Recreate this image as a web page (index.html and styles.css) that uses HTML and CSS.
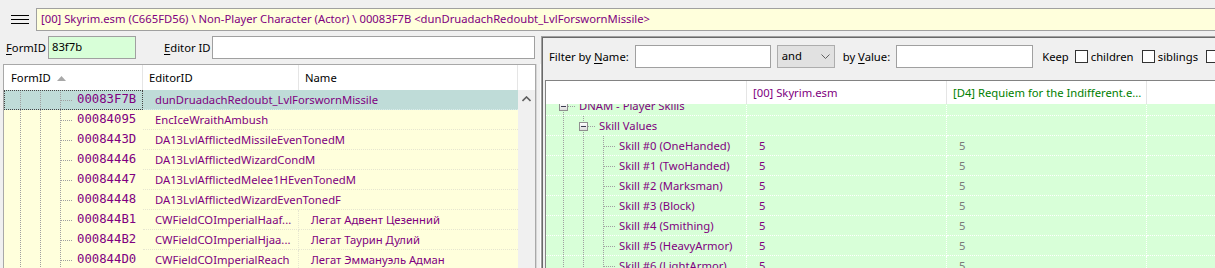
FILE: index.html
```html
<!DOCTYPE html>
<html lang="en">
<head>
    <meta charset="UTF-8">
    <title>xEdit</title>
    <link rel="stylesheet" href="styles.css">
</head>
<body>

    <header class="topbar">
        <div class="menu-button"><span></span><span></span><span></span></div>
        <div class="path">[00] Skyrim.esm (C665FD56) \ Non-Player Character (Actor) \ 00083F7B &lt;dunDruadachRedoubt_LvlForswornMissile&gt;</div>
    </header>

    <div class="workspace">
        <section class="left-pane">
            <div class="id-bar">
                <label class="lbl-formid"><u>F</u>ormID</label>
                <div class="field field-formid">83f7b</div>
                <label class="lbl-editorid"><u>E</u>ditor ID</label>
                <div class="field field-editorid"></div>
            </div>

            <div class="record-list">
                <div class="list-header">
                    <div class="hcol col-fid">FormID
                        <svg class="sort-arrow" width="9" height="5" viewBox="0 0 9 5"><path d="M0 5 L4.5 0 L9 5 Z" fill="#a8a8a8"/></svg>
                    </div>
                    <div class="hcol col-eid">EditorID</div>
                    <div class="hcol col-name">Name</div>
                    <div class="hcol col-rest"></div>
                </div>
                <div class="list-body">
                    <div class="list-rows">
                        <div class="lrow selected">
                            <div class="fid focused"><span class="indent"></span><span class="indent"></span><span class="leaf"></span>00083F7B</div>
                            <div class="eid wide">dunDruadachRedoubt_LvlForswornMissile</div>
                        </div>
                        <div class="lrow">
                            <div class="fid"><span class="indent"></span><span class="indent"></span><span class="leaf"></span>00084095</div>
                            <div class="eid wide">EncIceWraithAmbush</div>
                        </div>
                        <div class="lrow">
                            <div class="fid"><span class="indent"></span><span class="indent"></span><span class="leaf"></span>0008443D</div>
                            <div class="eid wide">DA13LvlAfflictedMissileEvenTonedM</div>
                        </div>
                        <div class="lrow">
                            <div class="fid"><span class="indent"></span><span class="indent"></span><span class="leaf"></span>00084446</div>
                            <div class="eid wide">DA13LvlAfflictedWizardCondM</div>
                        </div>
                        <div class="lrow">
                            <div class="fid"><span class="indent"></span><span class="indent"></span><span class="leaf"></span>00084447</div>
                            <div class="eid wide">DA13LvlAfflictedMelee1HEvenTonedM</div>
                        </div>
                        <div class="lrow">
                            <div class="fid"><span class="indent"></span><span class="indent"></span><span class="leaf"></span>00084448</div>
                            <div class="eid wide">DA13LvlAfflictedWizardEvenTonedF</div>
                        </div>
                        <div class="lrow">
                            <div class="fid"><span class="indent"></span><span class="indent"></span><span class="leaf"></span>000844B1</div>
                            <div class="eid">CWFieldCOImperialHaaf...</div>
                            <div class="name">Легат Адвент Цезенний</div>
                        </div>
                        <div class="lrow">
                            <div class="fid"><span class="indent"></span><span class="indent"></span><span class="leaf"></span>000844B2</div>
                            <div class="eid">CWFieldCOImperialHjaa...</div>
                            <div class="name">Легат Таурин Дулий</div>
                        </div>
                        <div class="lrow">
                            <div class="fid"><span class="indent"></span><span class="indent"></span><span class="leaf"></span>000844D0</div>
                            <div class="eid">CWFieldCOImperialReach</div>
                            <div class="name">Легат Эммануэль Адман</div>
                        </div>
                    </div>
                    <div class="vscroll">
                        <svg width="9" height="6" viewBox="0 0 9 6"><path d="M0.5 5 L4.5 1 L8.5 5" fill="none" stroke="#606060" stroke-width="1.6"/></svg>
                    </div>
                </div>
            </div>
        </section>

        <div class="splitter"></div>

        <section class="right-pane">
            <div class="filter-bar">
                <span class="flabel">Filter by <u>N</u>ame:</span>
                <div class="field field-name"></div>
                <div class="combo">and
                    <svg width="9" height="5" viewBox="0 0 9 5"><path d="M0.5 0.5 L4.5 4.5 L8.5 0.5" fill="none" stroke="#606060" stroke-width="1"/></svg>
                </div>
                <span class="flabel by-value">by <u>V</u>alue:</span>
                <div class="field field-value"></div>
                <span class="flabel keep">Keep</span>
                <div class="toggle toggle-children"><span class="check"></span>children</div>
                <div class="toggle toggle-siblings"><span class="check"></span>siblings</div>
                <div class="toggle toggle-last"><span class="check"></span></div>
            </div>

            <div class="view-grid">
                <div class="grid-header">
                    <div class="gcol gcol-tree"></div>
                    <div class="gcol gcol-master">[00] Skyrim.esm</div>
                    <div class="gcol gcol-plugin">[D4] Requiem for the Indifferent.e...</div>
                    <div class="gcol gcol-rest"></div>
                </div>
                <div class="grid-body">
                    <div class="grid-rows">
                        <div class="grow">
                            <div class="tree"><span class="node open"><i class="box"></i></span>DNAM - Player Skills</div>
                            <div class="val"></div><div class="val"></div><div class="val rest"></div>
                        </div>
                        <div class="grow">
                            <div class="tree"><span class="indent"></span><span class="node open"><i class="box"></i></span>Skill Values</div>
                            <div class="val"></div><div class="val"></div><div class="val rest"></div>
                        </div>
                        <div class="grow">
                            <div class="tree"><span class="indent"></span><span class="indent"></span><span class="leaf"></span>Skill #0 (OneHanded)</div>
                            <div class="val">5</div><div class="val other">5</div><div class="val rest"></div>
                        </div>
                        <div class="grow">
                            <div class="tree"><span class="indent"></span><span class="indent"></span><span class="leaf"></span>Skill #1 (TwoHanded)</div>
                            <div class="val">5</div><div class="val other">5</div><div class="val rest"></div>
                        </div>
                        <div class="grow">
                            <div class="tree"><span class="indent"></span><span class="indent"></span><span class="leaf"></span>Skill #2 (Marksman)</div>
                            <div class="val">5</div><div class="val other">5</div><div class="val rest"></div>
                        </div>
                        <div class="grow">
                            <div class="tree"><span class="indent"></span><span class="indent"></span><span class="leaf"></span>Skill #3 (Block)</div>
                            <div class="val">5</div><div class="val other">5</div><div class="val rest"></div>
                        </div>
                        <div class="grow">
                            <div class="tree"><span class="indent"></span><span class="indent"></span><span class="leaf"></span>Skill #4 (Smithing)</div>
                            <div class="val">5</div><div class="val other">5</div><div class="val rest"></div>
                        </div>
                        <div class="grow">
                            <div class="tree"><span class="indent"></span><span class="indent"></span><span class="leaf"></span>Skill #5 (HeavyArmor)</div>
                            <div class="val">5</div><div class="val other">5</div><div class="val rest"></div>
                        </div>
                        <div class="grow">
                            <div class="tree"><span class="indent"></span><span class="indent"></span><span class="leaf"></span>Skill #6 (LightArmor)</div>
                            <div class="val">5</div><div class="val other">5</div><div class="val rest"></div>
                        </div>
                    </div>
                </div>
            </div>
        </section>
    </div>

</body>
</html>
```

FILE: styles.css
```css
:root {
    --window-bg: #f0f0f0;
    --record-text: #800080; /* purple record text */
    --plugin-text: #008000; /* green override header */
    --row-yellow: #ffffdc;
    --row-green: #d8ffd8;
    --row-selected: #bfdcd8;
    --tree-line: #a0a0a0;
    --field-border: #a0a0a0;
}

* {
    box-sizing: border-box;
}

body {
    margin: 0;
    width: 1215px;
    height: 268px;
    overflow: hidden;
    background-color: var(--window-bg);
    font-family: "Segoe UI", "Noto Sans", sans-serif;
    font-size: 11.25px;
    color: #000;
}

u {
    text-decoration-thickness: 1px;
    text-underline-offset: 2px;
}

/* top path bar */
.topbar {
    display: flex;
    align-items: flex-start;
    height: 34px;
    padding-top: 8px;
}

.menu-button {
    width: 36px;
    padding: 7px 0 0 11px;
}

.menu-button span {
    display: block;
    width: 18px;
    height: 1px;
    background-color: #000;
    margin-bottom: 3px;
}

.path {
    flex: 1;
    height: 23px;
    border: 1px solid var(--field-border);
    border-right: none;
    background-color: var(--row-yellow);
    color: var(--record-text);
    padding-left: 4px;
    line-height: 20px;
    white-space: nowrap;
}

.workspace {
    display: flex;
    width: 1215px;
    height: 234px;
    overflow: hidden;
}

/* left side */
.left-pane {
    width: 536px;
    flex-shrink: 0;
    display: flex;
    flex-direction: column;
}

.id-bar {
    display: flex;
    align-items: flex-start;
    height: 30px;
    padding-top: 2px;
    flex-shrink: 0;
}

.id-bar label {
    line-height: 23px;
    white-space: nowrap;
}

.lbl-formid {
    margin-left: 6px;
    width: 42px;
}

.lbl-editorid {
    margin-left: 28px;
    width: 48px;
}

.field {
    flex-shrink: 0;
    height: 23px;
    border: 1px solid var(--field-border);
    background-color: #fff;
    line-height: 20px;
    padding-left: 3px;
}

.field-formid {
    width: 88px;
    background-color: var(--row-green);
}

.field-editorid {
    width: 323px;
}

.record-list {
    flex: 1;
    margin-left: 3px;
    width: 533px;
    border: 1px solid #a8a8a8;
    border-bottom: none;
    background-color: #fff;
    display: flex;
    flex-direction: column;
    overflow: hidden;
}

.list-header {
    display: flex;
    height: 25px;
    flex-shrink: 0;
}

.hcol {
    border-right: 1px solid #e5e5e5;
    line-height: 25px;
    white-space: nowrap;
}

.col-fid {
    width: 139px;
    padding-left: 7px;
}

.sort-arrow {
    margin-left: 3px;
    vertical-align: 1px;
}

.col-eid {
    width: 156px;
    padding-left: 6px;
}

.col-name {
    width: 219px;
    padding-left: 6px;
}

.col-rest {
    flex: 1;
    border-right: none;
}

.list-body {
    flex: 1;
    display: flex;
}

.list-rows {
    width: 514px;
}

.vscroll {
    flex: 1;
    background-color: var(--window-bg);
    padding: 6px 0 0 4px;
}

.vscroll svg {
    display: block;
}

.lrow {
    display: flex;
    height: 20px;
    background-color: var(--row-yellow);
    color: var(--record-text);
    line-height: 19px;
    white-space: nowrap;
}

.lrow.selected {
    background-color: var(--row-selected);
}

.fid {
    width: 139px;
    display: flex;
    padding-left: 6px;
    font-family: "DejaVu Sans Mono", monospace;
    font-size: 12.3px;
}

.fid.focused {
    outline: 1px dotted #444;
    outline-offset: -1px;
}

.eid,
.name {
    border-bottom: 1px dotted #e6e6d0;
    padding-left: 12px;
    overflow: hidden;
}

.eid {
    width: 156px;
    border-right: 1px dotted #e6e6d0;
}

.eid.wide {
    width: 375px;
    border-right: none;
}

.name {
    width: 219px;
}

.selected .eid {
    border-bottom-color: #d8ecea;
}

/* dotted tree lines, shared by both trees */
.indent,
.leaf,
.node {
    flex-shrink: 0;
    height: 20px;
    background-repeat: no-repeat;
}

.indent {
    width: 20px;
    background-image: repeating-linear-gradient(to bottom, var(--tree-line) 0 1px, transparent 1px 2px);
    background-size: 1px 20px;
    background-position: 10px 0;
}

.leaf {
    width: 22px;
    margin-right: 5px;
    background-image:
        repeating-linear-gradient(to bottom, var(--tree-line) 0 1px, transparent 1px 2px),
        repeating-linear-gradient(to right, var(--tree-line) 0 1px, transparent 1px 2px);
    background-size: 1px 20px, 12px 1px;
    background-position: 10px 0, 11px 10px;
}

.node {
    width: 22px;
    margin-right: 4px;
    display: flex;
    align-items: center;
    padding-left: 6px;
    background-image:
        repeating-linear-gradient(to bottom, var(--tree-line) 0 1px, transparent 1px 2px),
        repeating-linear-gradient(to right, var(--tree-line) 0 1px, transparent 1px 2px);
    background-size: 1px 20px, 8px 1px;
    background-position: 10px 0, 15px 10px;
}

.box {
    display: block;
    width: 9px;
    height: 9px;
    border: 1px solid #8f8f8f;
    background: linear-gradient(#ffffff, #dcdcdc);
    position: relative;
}

.box::after {
    content: "";
    position: absolute;
    left: 1px;
    top: 3px;
    width: 5px;
    height: 1px;
    background-color: #3c3c50;
}

/* splitter and right side */
.splitter {
    width: 5px;
    flex-shrink: 0;
    box-shadow: inset -1px 0 #ffffff, inset 1px 0 #d6d6d6;
    margin-top: 30px;
}

.right-pane {
    flex: 1;
    min-width: 0;
    margin-top: 2px;
    border-top: 1px solid #a0a0a0;
    border-left: 1px solid #a0a0a0;
    box-shadow: inset 1px 1px #696969;
    display: flex;
    flex-direction: column;
}

.filter-bar {
    display: flex;
    align-items: center;
    height: 43px;
    flex-shrink: 0;
    padding: 0 0 5px 7px;
    white-space: nowrap;
    overflow: hidden;
}

.filter-bar > * {
    flex-shrink: 0;
}

.flabel {
    margin-right: 4px;
}

.field-name {
    width: 136px;
    margin-left: 2px;
}

.combo {
    width: 58px;
    height: 23px;
    margin-left: 6px;
    border: 1px solid #adadad;
    background-color: #e1e1e1;
    padding-left: 4px;
    line-height: 20px;
    display: flex;
    justify-content: space-between;
    align-items: center;
}

.combo svg {
    margin-right: 4px;
}

.by-value {
    margin-left: 8px;
}

.field-value {
    width: 137px;
    margin-left: 2px;
}

.keep {
    margin-left: 9px;
    margin-right: 6px;
}

/* checkbox controls have fixed widths, like the native ones */
.toggle {
    display: flex;
    align-items: center;
}

.toggle-children {
    width: 67px;
}

.toggle-siblings {
    width: 64px;
}

.toggle-last {
    width: 16px;
}

.check {
    flex-shrink: 0;
    width: 13px;
    height: 13px;
    border: 1px solid #333;
    background-color: #fff;
    margin-right: 3px;
}

.view-grid {
    flex: 1;
    margin-left: 3px;
    border-top: 1px solid #828282;
    border-left: 1px solid #828282;
    background-color: #fff;
    display: flex;
    flex-direction: column;
    overflow: hidden;
}

.grid-header {
    display: flex;
    height: 23px;
    flex-shrink: 0;
}

.gcol {
    width: 200px;
    flex-shrink: 0;
    border-right: 1px solid #e5e5e5;
    padding-left: 6px;
    line-height: 23px;
    white-space: nowrap;
}

.gcol-tree {
    width: 201px;
}

.gcol-master {
    color: var(--record-text);
}

.gcol-plugin {
    color: var(--plugin-text);
}

.gcol-rest {
    flex: 1;
    border-right: none;
}

.grid-body {
    flex: 1;
    overflow: hidden;
    background-color: var(--row-green);
}

.grid-rows {
    margin-top: -8px;
}

.grow {
    display: flex;
    height: 20px;
    color: var(--record-text);
    line-height: 19px;
    white-space: nowrap;
}

.tree {
    width: 201px;
    flex-shrink: 0;
    display: flex;
    padding-left: 7px;
    border-right: 1px dotted #fff;
    border-bottom: 1px dotted #fff;
}

.tree .leaf {
    margin-right: 4px;
}

.val {
    width: 200px;
    flex-shrink: 0;
    padding-left: 12px;
    border-right: 1px dotted #fff;
    border-bottom: 1px dotted #fff;
}

.val.other {
    color: #7a7a7a;
}

.val.rest {
    flex: 1;
    border-right: none;
}
```
